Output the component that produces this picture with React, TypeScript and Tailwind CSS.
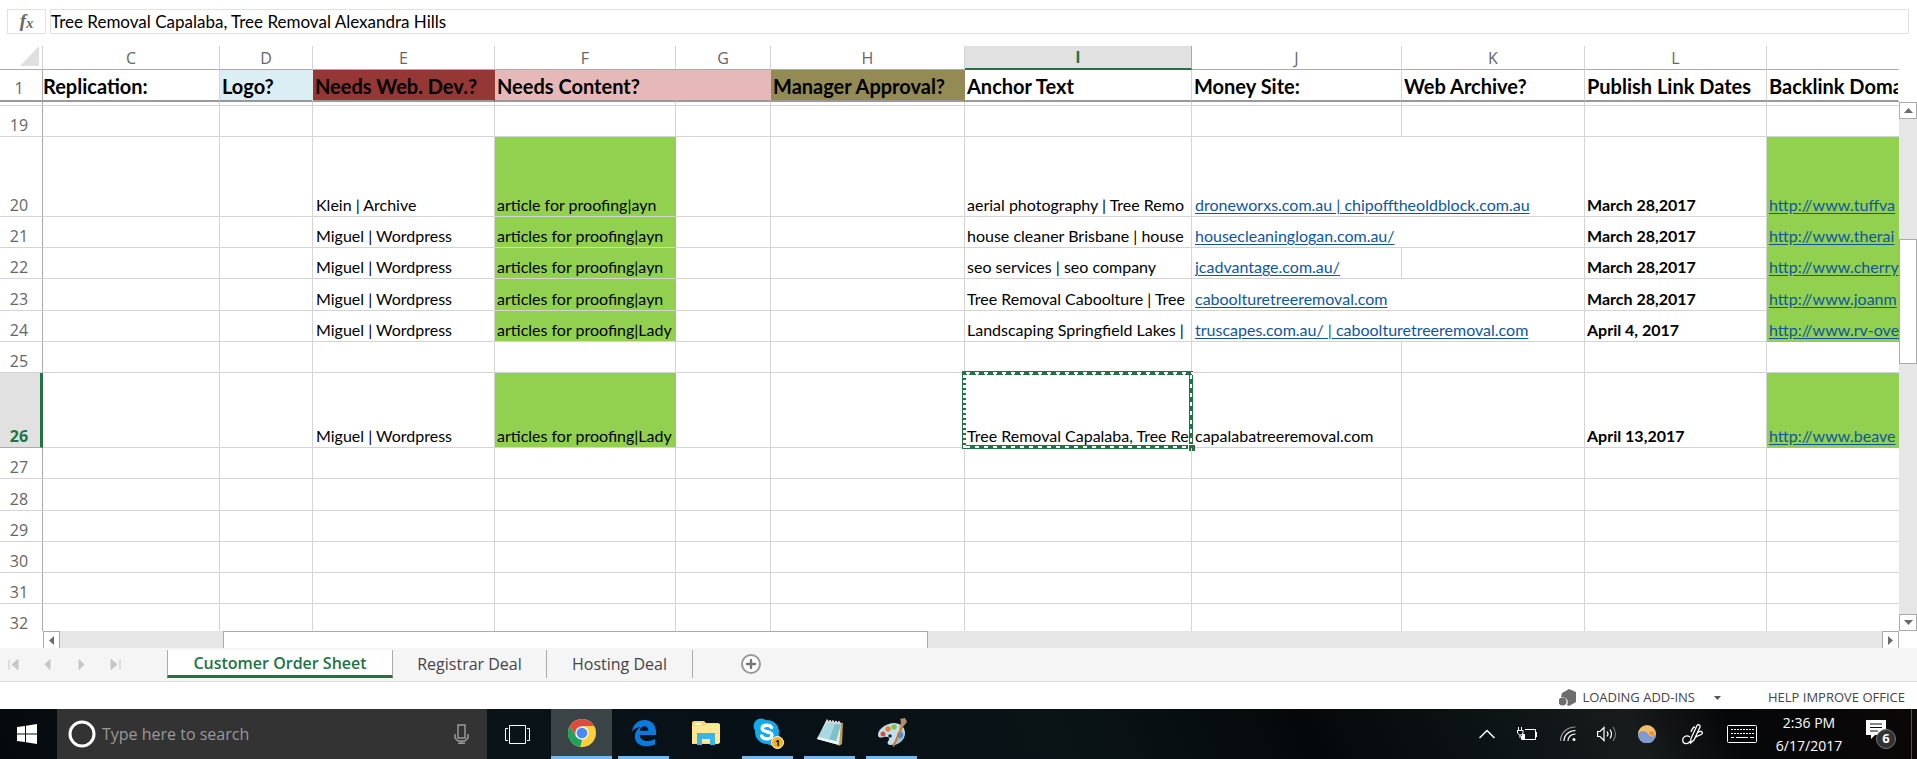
import type { ReactNode } from "react"
import { Plus } from "lucide-react"

type Row = {
  n: number
  height: string
  dev?: string
  content?: string
  anchor?: string
  money?: string
  moneyLink?: boolean
  wide?: boolean
  date?: string
  backlink?: string
}

const rows: Row[] = [
  { n: 19, height: "h-[31px]" },
  {
    n: 20,
    height: "h-[80px]",
    dev: "Klein | Archive",
    content: "article for proofing|ayn",
    anchor: "aerial photography | Tree Remo",
    money: "droneworxs.com.au | chipofftheoldblock.com.au",
    moneyLink: true,
    wide: true,
    date: "March 28,2017",
    backlink: "http://www.tuffva",
  },
  {
    n: 21,
    height: "h-[31px]",
    dev: "Miguel | Wordpress",
    content: "articles for proofing|ayn",
    anchor: "house cleaner Brisbane | house",
    money: "housecleaninglogan.com.au/",
    moneyLink: true,
    wide: true,
    date: "March 28,2017",
    backlink: "http://www.therai",
  },
  {
    n: 22,
    height: "h-[31px]",
    dev: "Miguel | Wordpress",
    content: "articles for proofing|ayn",
    anchor: "seo services | seo company",
    money: "jcadvantage.com.au/",
    moneyLink: true,
    date: "March 28,2017",
    backlink: "http://www.cherry",
  },
  {
    n: 23,
    height: "h-[32px]",
    dev: "Miguel | Wordpress",
    content: "articles for proofing|ayn",
    anchor: "Tree Removal Caboolture | Tree",
    money: "caboolturetreeremoval.com",
    moneyLink: true,
    wide: true,
    date: "March 28,2017",
    backlink: "http://www.joanm",
  },
  {
    n: 24,
    height: "h-[31px]",
    dev: "Miguel | Wordpress",
    content: "articles for proofing|Lady",
    anchor: "Landscaping Springfield Lakes |",
    money: "truscapes.com.au/ | caboolturetreeremoval.com",
    moneyLink: true,
    wide: true,
    date: "April 4, 2017",
    backlink: "http://www.rv-ove",
  },
  { n: 25, height: "h-[31px]" },
  {
    n: 26,
    height: "h-[75px]",
    dev: "Miguel | Wordpress",
    content: "articles for proofing|Lady",
    anchor: "Tree Removal Capalaba, Tree Re",
    money: "capalabatreeremoval.com",
    date: "April 13,2017",
    backlink: "http://www.beave",
  },
  { n: 27, height: "h-[31px]" },
  { n: 28, height: "h-[32px]" },
  { n: 29, height: "h-[31px]" },
  { n: 30, height: "h-[31px]" },
  { n: 31, height: "h-[31px]" },
  { n: 32, height: "h-[27px]" },
]

const letters = ["C", "D", "E", "F", "G", "H", "I", "J", "K", "L", ""]

const heads = [
  { text: "Replication:", style: "border-[#d4d4d4]" },
  { text: "Logo?", style: "border-[#daeef3] bg-[#daeef3]" },
  { text: "Needs Web. Dev.?", style: "border-[#953735] bg-[#953735]" },
  { text: "Needs Content?", style: "border-[#e6b8b7] bg-[#e6b8b7]" },
  { text: "", style: "border-[#e6b8b7] bg-[#e6b8b7]" },
  { text: "Manager Approval?", style: "border-[#948a54] bg-[#948a54]" },
  { text: "Anchor Text", style: "border-[#d4d4d4]" },
  { text: "Money Site:", style: "border-[#d4d4d4]" },
  { text: "Web Archive?", style: "border-[#d4d4d4]" },
  { text: "Publish Link Dates", style: "border-[#d4d4d4]" },
  { text: "Backlink Doma", style: "border-transparent" },
]

const cell = "border-r border-b border-[#d4d4d4] p-0 pl-[2px] align-bottom"

function Clip({ children }: { children: ReactNode }) {
  return <div className="overflow-hidden whitespace-nowrap">{children}</div>
}

function SheetLink({ children }: { children: ReactNode }) {
  return (
    <a href="#" className="text-[#0f569e] underline underline-offset-2">
      {children}
    </a>
  )
}

function Selection() {
  return (
    <div className="pointer-events-none absolute -top-[2px] -right-[2px] -bottom-[2px] -left-[3px]">
      <svg className="h-full w-full" fill="none">
        <rect width="100%" height="100%" stroke="#217346" strokeWidth="8" />
        <g stroke="#fff" strokeWidth="2">
          <line x1="4" x2="100%" y1="2" y2="2" strokeDasharray="4 5" />
          <line x1="2" x2="2" y1="4" y2="100%" strokeDasharray="3 2" />
          <g transform="translate(-2 0)">
            <line x1="100%" x2="100%" y1="4" y2="100%" strokeDasharray="4 5" />
          </g>
          <g transform="translate(0 -2)">
            <line x1="4" x2="100%" y1="100%" y2="100%" strokeDasharray="4 5" />
          </g>
        </g>
        <g stroke="#fff" strokeWidth="1">
          <line x1="4" x2="100%" y1="3.500" y2="3.500" strokeDasharray="2 7" strokeDashoffset="-1" />
          <line x1="3.500" x2="3.500" y1="4" y2="100%" strokeDasharray="3 2" />
        </g>
      </svg>
      <span className="absolute -right-[2px] -bottom-[2px] size-[7px] border-t border-l border-white bg-[#217346]" />
    </div>
  )
}

function FormulaBar() {
  return (
    <div className="flex gap-1 pt-[9px] pr-2 pl-[7px]">
      <button
        aria-label="Insert function"
        className="flex h-[25px] w-[39px] items-center justify-center border border-[#e1e1e1] font-['Liberation_Serif',serif] text-[19px] font-bold text-[#666] italic"
      >
        f<span className="pt-1 text-[14px]">x</span>
      </button>
      <input
        aria-label="Formula"
        defaultValue="Tree Removal Capalaba, Tree Removal Alexandra Hills"
        className="h-[25px] min-w-0 flex-1 border border-[#e1e1e1] font-['Lato',sans-serif] text-[17px] text-black outline-none"
      />
    </div>
  )
}

function Grid() {
  return (
    <table className="w-full table-fixed border-separate border-spacing-0 font-['Lato',sans-serif] text-[16px] leading-[22px] text-black">
      <colgroup>
        <col className="w-[43px]" />
        <col className="w-[177px]" />
        <col className="w-[93px]" />
        <col className="w-[182px]" />
        <col className="w-[181px]" />
        <col className="w-[95px]" />
        <col className="w-[194px]" />
        <col className="w-[227px]" />
        <col className="w-[210px]" />
        <col className="w-[183px]" />
        <col className="w-[182px]" />
        <col />
      </colgroup>
      <thead>
        <tr className="h-[24px] font-['Open_Sans',sans-serif] text-[16px] text-[#666]">
          <th className="border-r border-b border-[#ababab] border-r-[#d4d4d4] p-0 align-top">
            <svg className="ml-5 block size-5" viewBox="0 0 20 20">
              <path d="M19 0V20H0z" fill="#dfdfdf" />
            </svg>
          </th>
          {letters.map((letter, i) => (
            <th
              key={i}
              className={
                letter === "I"
                  ? "border-r border-b-2 border-r-[#ababab] border-b-[#217346] bg-[#e1e1e1] p-0 font-bold text-[#217346]"
                  : "border-r border-b border-r-[#d4d4d4] border-b-[#ababab] p-0 font-normal last:border-r-0"
              }
            >
              <div className="h-[22px]">{letter}</div>
            </th>
          ))}
        </tr>
        <tr className="h-[32px] text-[20px] leading-[28px]">
          <th className="border-r border-b-2 border-r-[#ababab] border-b-[#999] p-0 pr-1 align-bottom font-['Open_Sans',sans-serif] text-[16px] leading-[24px] font-normal text-[#666]">
            1
          </th>
          {heads.map((head, i) => (
            <th
              key={i}
              className={
                "border-r border-b-2 border-b-[#999] p-0 pt-[2px] text-left align-bottom font-bold " +
                (i === 0 ? "" : "pl-[2px] ") +
                head.style
              }
            >
              <Clip>{head.text}</Clip>
            </th>
          ))}
        </tr>
      </thead>
      <tbody>
        <tr className="h-[4px]">
          <td className="border-r border-b border-[#d4d4d4] border-r-[#ababab] p-0" />
          {letters.map((_, i) => (
            <td key={i} className="border-r border-b border-[#d4d4d4] p-0 last:border-r-0" />
          ))}
        </tr>
        {rows.map((row) => {
          const selected = row.n === 26
          const last = row.n === 32
          const box = last ? cell + " border-b-0" : cell
          return (
            <tr key={row.n} className={row.height}>
              <th
                className={
                  "p-0 align-bottom font-['Open_Sans',sans-serif] text-[16px] " +
                  (selected
                    ? "border-r-[3px] border-b border-[#ababab] border-r-[#217346] bg-[#e1e1e1] pr-[2px] font-bold text-[#217346]"
                    : "border-r border-[#d4d4d4] border-r-[#ababab] pr-1 font-normal text-[#666] " + (last ? "" : "border-b"))
                }
              >
                <div className={last ? "h-[27px] overflow-hidden leading-[38px]" : "leading-[22px]"}>{row.n}</div>
              </th>
              <td className={box} />
              <td className={box} />
              <td className={box + " pl-[3px]"}>
                <Clip>{row.dev}</Clip>
              </td>
              <td
                className={
                  "border-r border-b p-0 pl-[2px] align-bottom whitespace-nowrap " +
                  (row.content ? "border-[#d4d4d4] border-r-[#92d050] bg-[#92d050]" : "border-[#d4d4d4]") +
                  (last ? " border-b-0" : "")
                }
              >
                {row.content}
              </td>
              <td className={box} />
              <td className={box} />
              <td className={box + " relative"}>
                <Clip>{row.anchor}</Clip>
                {selected && <Selection />}
              </td>
              <td colSpan={row.wide ? 2 : 1} className={box + " pl-[3px]"}>
                <Clip>{row.moneyLink ? <SheetLink>{row.money}</SheetLink> : row.money}</Clip>
              </td>
              {!row.wide && <td className={box} />}
              <td className={box + " font-bold"}>
                <Clip>{row.date}</Clip>
              </td>
              <td
                className={
                  "p-0 pl-[2px] align-bottom " +
                  (row.backlink ? "border-b border-[#92d050] bg-[#92d050]" : last ? "" : "border-b border-[#d4d4d4]")
                }
              >
                {row.backlink && (
                  <Clip>
                    <SheetLink>{row.backlink}</SheetLink>
                  </Clip>
                )}
              </td>
            </tr>
          )
        })}
      </tbody>
    </table>
  )
}

function Arrow({ d }: { d: string }) {
  return (
    <svg className="size-[9px]" viewBox="0 0 9 9" fill="#6a6a6a">
      <path d={d} />
    </svg>
  )
}

function VerticalScroll() {
  return (
    <div className="mt-[56px] flex w-[18px] shrink-0 flex-col bg-[#e6e6e6]">
      <button aria-label="Scroll up" className="flex h-[17px] items-center justify-center border border-[#ababab] bg-white">
        <Arrow d="M0 7L4.500 2L9 7z" />
      </button>
      <div className="flex-[120]" />
      <div className="h-[125px] border border-[#ababab] bg-white" />
      <div className="flex-[250]" />
      <button aria-label="Scroll down" className="flex h-[17px] items-center justify-center border border-[#ababab] bg-white">
        <Arrow d="M0 2L4.500 7L9 2z" />
      </button>
    </div>
  )
}

function HorizontalScroll() {
  return (
    <div className="mr-[18px] ml-[43px] flex h-[17px] bg-[#e6e6e6]">
      <button aria-label="Scroll left" className="flex w-[17px] items-center justify-center border border-b-0 border-[#ababab] bg-white">
        <Arrow d="M7 0L2 4.500L7 9z" />
      </button>
      <div className="w-[163px]" />
      <div className="w-[38%] border border-b-0 border-[#ababab] bg-white" />
      <div className="flex-1" />
      <button aria-label="Scroll right" className="flex w-[17px] items-center justify-center border border-b-0 border-[#ababab] bg-white">
        <Arrow d="M2 0L7 4.500L2 9z" />
      </button>
    </div>
  )
}

function SheetTabs() {
  const nav = [
    { label: "First sheet", d: "M1 0V10M10 0V10L4 5z" },
    { label: "Previous sheet", d: "M8 0V10L3 5z" },
    { label: "Next sheet", d: "M3 0V10L8 5z" },
    { label: "Last sheet", d: "M10 0V10M1 0V10L7 5z" },
  ]
  return (
    <div className="flex h-[34px] items-start border-b border-[#dcdcdc] bg-[#f5f5f5] pt-[2px] font-['Open_Sans',sans-serif] text-[16px] text-[#444]">
      <div className="flex h-[28px] w-[167px] items-center gap-[23px] pl-2">
        {nav.map((item) => (
          <button key={item.label} aria-label={item.label}>
            <svg className="block size-[11px]" viewBox="0 0 11 10" fill="#c6c6c6" stroke="#c6c6c6" strokeWidth="1">
              <path d={item.d} />
            </svg>
          </button>
        ))}
      </div>
      <button className="h-[28px] w-[226px] border-x border-b-[3px] border-x-[#ababab] border-b-[#217346] bg-white leading-[24px] font-semibold text-[#217346]">
        Customer Order Sheet
      </button>
      <button className="h-[28px] w-[154px] border-r border-[#ababab] leading-[24px]">Registrar Deal</button>
      <button className="h-[28px] w-[146px] border-r border-[#ababab] leading-[24px]">Hosting Deal</button>
      <button
        aria-label="New sheet"
        className="mt-1 ml-[48px] flex size-5 items-center justify-center rounded-full border-2 border-[#999] bg-white"
      >
        <Plus className="size-[14px] text-[#777]" strokeWidth={4} />
      </button>
    </div>
  )
}

function StatusBar() {
  return (
    <div className="flex h-[27px] items-center justify-end pt-1 pr-3 font-['Open_Sans',sans-serif] text-[13px] text-[#444]">
      <svg className="mr-[6px] size-[17px]" viewBox="0 0 17 17" fill="#6d6d6d">
        <path d="M3 4L10 0L17 3V13L10 17L8 16C10 12 8 8 2 8z" />
        <circle cx="3.500" cy="12.500" r="4" />
      </svg>
      <span>LOADING ADD-INS</span>
      <svg className="mr-[47px] ml-[19px] h-1 w-[7px]" viewBox="0 0 7 4" fill="#555">
        <path d="M0 0H7L3.500 4z" />
      </svg>
      <a href="#">HELP IMPROVE OFFICE</a>
    </div>
  )
}

function ChromeIcon() {
  return (
    <svg className="size-[28px]" viewBox="0 0 28 28">
      <circle cx="14" cy="14" r="14" fill="#fdd03b" />
      <path d="M14 14L8 17.500L1.900 7A14 14 0 0 1 26.100 7H14z" fill="#dd4b3e" />
      <path d="M1.900 7L8 17.500L14 20.500L12.500 28A14 14 0 0 1 1.900 7z" fill="#1da261" />
      <path d="M20 17.500L14 28A14 14 0 0 1 12 27.900L17 18z" fill="#fdd03b" />
      <circle cx="14" cy="14" r="6.800" fill="#f4f4f4" />
      <circle cx="14" cy="14" r="5.300" fill="#4a8af4" />
    </svg>
  )
}

function EdgeIcon() {
  return (
    <svg className="size-[28px]" viewBox="0 0 28 28" fill="#0a7bdc">
      <path d="M2 12.500C3 5.500 8 1 14.500 1C21.500 1 26 6 26 12.500V16H9.700C10 20 13.500 22 17.500 22C20.500 22 23 21.200 25 20V25.200C22.500 26.600 19.500 27.300 16.300 27.300C9.500 27.300 4.800 23.300 4.800 17.500C4.800 13.500 7 10 10.500 8C7 8.400 4 10 2 12.500zM9.800 11.800H18.400C18.400 8.800 16.800 7.200 14.300 7.200C11.900 7.200 10.200 9 9.800 11.800z" />
    </svg>
  )
}

function ExplorerIcon() {
  return (
    <svg className="h-[24px] w-[28px]" viewBox="0 0 28 24">
      <path d="M0 1H13V5H0z" fill="#f5b400" />
      <path d="M0 23V1L2 0H12L14 2H27V23z" fill="#fbd971" />
      <path d="M0 22V5H12L14 3H28V22z" fill="#ffe794" />
      <path d="M3 2H9V4H3z" fill="#fff" />
      <path d="M5 24V12H23V24H18V18H10V24z" fill="#3fb3e3" />
    </svg>
  )
}

function SkypeIcon() {
  return (
    <svg className="h-[32px] w-[32px]" viewBox="0 0 32 32">
      <circle cx="15" cy="15" r="12" fill="#14a9e8" />
      <circle cx="9" cy="9" r="7.500" fill="#14a9e8" />
      <circle cx="20" cy="21" r="7.500" fill="#14a9e8" />
      <path
        d="M19.500 10.500C18.500 8.800 16.800 8.200 14.800 8.200C12 8.200 10.200 9.500 10.200 11.500C10.200 16 20 13.500 20 18.300C20 20.500 17.800 21.900 15 21.900C12.500 21.900 10.600 21 9.600 19"
        fill="none"
        stroke="#fff"
        strokeWidth="3.400"
        strokeLinecap="round"
      />
      <circle cx="25.500" cy="25.500" r="6" fill="#fcb116" stroke="#fff" strokeWidth="1" />
      <text x="25.500" y="29" textAnchor="middle" fontSize="9" fontWeight="bold" fontFamily="Open Sans, sans-serif">
        1
      </text>
    </svg>
  )
}

function NotepadIcon() {
  return (
    <svg className="size-[28px]" viewBox="0 0 28 28">
      <path d="M10 2L27 4L26 25L23 27z" fill="#c79a4b" />
      <path d="M10 2L25 4L23 26L1 20z" fill="#d9eef2" />
      <path d="M11 4L25 5L20 23L2 18z" fill="#7fc0cb" />
      <path d="M11 4L19 5L13 21L2 18z" fill="#a9d9df" />
      <path d="M2 18L20 22L23 26L1 20z" fill="#eef7f8" />
      <path d="M10 2L25 4" stroke="#d8d8d8" strokeWidth="3" strokeDasharray="2 1" />
    </svg>
  )
}

function PaintIcon() {
  return (
    <svg className="size-[30px]" viewBox="0 0 30 30">
      <path
        d="M12 6C19 3 28 7 28 15C28 22 21 28 13 27C10 26.500 10 24 12 22C13 19 10 18 7 19C4 20 1 20 1 17C1 12 6 8 12 6z"
        fill="#c5ddec"
      />
      <path d="M22 8C27 11 28 17 25 22C22 26 17 27 13 27C20 24 24 17 22 8z" fill="#94bdd8" />
      <circle cx="6" cy="16" r="2.500" fill="#d94f3a" />
      <circle cx="11" cy="11" r="2.700" fill="#e2822c" />
      <circle cx="17" cy="9" r="2.700" fill="#8bc23f" />
      <circle cx="23" cy="17" r="3" fill="#3d8fdc" />
      <circle cx="13" cy="18" r="1.800" fill="#1d2a33" />
      <path d="M17 29L15.500 28L24 8L26 9z" fill="#d0782c" />
      <path d="M23 8L24 4L23 1L28 0L30 4L26 9z" fill="#b58a68" />
    </svg>
  )
}

const apps = [
  { name: "Edge", icon: <EdgeIcon />, open: true },
  { name: "File Explorer", icon: <ExplorerIcon />, open: false },
  { name: "Skype", icon: <SkypeIcon />, open: true },
  { name: "Notepad", icon: <NotepadIcon />, open: true },
  { name: "Paint", icon: <PaintIcon />, open: true },
]

function Tray() {
  return (
    <div className="ml-auto flex items-center text-white">
      <button aria-label="Show hidden icons">
        <svg className="mr-[22px] block h-[10px] w-4" viewBox="0 0 16 10" fill="none" stroke="#fff" strokeWidth="1.500">
          <path d="M0.500 9L8 1.500L15.500 9" />
        </svg>
      </button>
      <svg className="mr-[23px] h-[14px] w-5" viewBox="0 0 20 14" fill="none" stroke="#fff">
        <path d="M8 2.500H18.500V12.500H4.500V9M19.500 5V10M1.500 0V3M4.500 0V3M0 3.500H6V6L4.500 8H2.500L0.500 6V3.500M3 8V11" />
        <path d="M5 7H8V12H5z" fill="#fff" stroke="none" />
      </svg>
      <svg className="mr-[21px] size-4" viewBox="0 0 16 16" fill="none" stroke="#fff" strokeWidth="1.200">
        <path d="M0.500 15C0.500 7 7 1 15.500 1" stroke="#999" />
        <path d="M4 15C4 9 9 4.500 15.500 4.500M8 15C8 11 11 8 15.500 8" />
        <circle cx="14" cy="13.500" r="1.500" fill="#fff" stroke="none" />
      </svg>
      <svg className="mr-[21px] h-4 w-5" viewBox="0 0 20 16" fill="none" stroke="#fff" strokeWidth="1.200">
        <path d="M0.600 5.500H3L7 1.500V14.500L3 10.500H0.600zM10 5.500Q12 8 10 10.500" />
        <path d="M13 3.500Q16 8 13 12.500" />
        <path d="M16 1Q21 8 16 15" stroke="#777" />
      </svg>
      <svg className="mr-[26px] size-[18px]" viewBox="0 0 18 18">
        <circle cx="9" cy="9" r="9" fill="#f3bd68" />
        <path d="M11 7L15 6L17 11L12 10z" fill="#ef8a2e" />
        <path d="M0 9C4 4 8 6 11 10C13 12 16 12 18 10A9 9 0 0 1 0 9z" fill="#7f9ad0" />
      </svg>
      <svg className="mr-6 size-[21px]" viewBox="0 0 21 21" fill="none" stroke="#fff" strokeWidth="1.300">
        <path d="M9 14.500L15 1.500C16 0 18.500 1 18 3L12 16L8.500 19zM13 3C11 3 10 5 9 8M8 13C4 10.500 0.500 13 0.700 16.500C1 20.500 6.500 20.500 8 17M16 8.500C18 6.500 21 7.500 20.300 9.500C19 12 14.500 10.500 13 14" />
      </svg>
      <svg className="mr-[17px] h-[18px] w-[30px]" viewBox="0 0 30 18" fill="none" stroke="#fff">
        <rect x="0.500" y="0.500" width="29" height="17" rx="1" />
        <path d="M4 4.500H27M4 8.500H27" strokeDasharray="2 1" />
        <path d="M4 12.500H7M9 12.500H21M23 12.500H27" />
      </svg>
      <div className="w-[70px] text-center font-['Open_Sans',sans-serif] text-[14px] leading-[23px]">
        <div>2:36 PM</div>
        <div>6/17/2017</div>
      </div>
      <button aria-label="Notifications" className="relative ml-[22px]">
        <svg className="block h-[30px] w-[30px]" viewBox="0 0 30 30">
          <path d="M0 1H20V16H9L5 20V16H0z" fill="#fff" />
          <path d="M4 5H16M4 8.500H16M4 12H12" stroke="#0a0d0f" strokeWidth="1.200" />
        </svg>
        <span className="absolute right-0 bottom-0 flex size-5 items-center justify-center rounded-full border border-[#777] bg-[#333] font-['Open_Sans',sans-serif] text-[13px] font-bold">
          6
        </span>
      </button>
      <div className="mr-[5px] ml-[15px] h-[50px] w-px bg-[#555]" />
    </div>
  )
}

function Taskbar() {
  return (
    <div className="flex h-[50px] bg-[linear-gradient(65deg,#04090d_0%,#0a1519_22%,#071016_38%,#0a1417_55%,#04080b_68%,#0d1415_78%,#171b1b_85%,#060709_90%,#0b0807_100%)]">
      <button aria-label="Start" className="flex w-[57px] items-center pl-[17px]">
        <svg className="size-5" viewBox="0 0 20 20" fill="#fff">
          <path d="M0 3L8 1.900V9.500H0zM9 1.700L20 0V9.500H9zM0 10.500H8V18.100L0 17zM9 10.500H20V20L9 18.300z" />
        </svg>
      </button>
      <label className="flex w-[430px] items-center bg-[#333] pr-[18px] pl-[11px]">
        <svg className="size-[28px] shrink-0" viewBox="0 0 28 28" fill="none">
          <circle cx="14" cy="14" r="12" stroke="#fff" strokeWidth="3" />
        </svg>
        <input
          aria-label="Search"
          placeholder="Type here to search"
          className="ml-[6px] min-w-0 flex-1 font-['Open_Sans',sans-serif] text-[16px] outline-none placeholder:text-[#999]"
        />
        <svg className="h-5 w-[15px]" viewBox="0 0 15 20" fill="none" stroke="#999" strokeWidth="1.500">
          <path d="M4 1H11V14H4zM1 10V14L4 17H11L14 14V10M7.500 17V19M4 19.200H11" />
        </svg>
      </label>
      <button aria-label="Task view" className="mr-[3px] flex w-[61px] items-center justify-center">
        <svg className="h-[19px] w-[25px]" viewBox="0 0 25 19" fill="none" stroke="#fff">
          <path d="M4.500 0.500H20.500V18.500H4.500zM3 3.500H0.500V15.500H3M22 3.500H24.500V15.500H22" />
        </svg>
      </button>
      <button aria-label="Chrome" className="flex w-[61px] items-center justify-center border-b-[3px] border-[#76b9ed] bg-[#3a4447]">
        <ChromeIcon />
      </button>
      {apps.map((app) => (
        <button
          key={app.name}
          aria-label={app.name}
          className={
            "mr-[5px] ml-[6px] flex w-[51px] items-center justify-center border-b-[3px] " +
            (app.open ? "border-[#76b9ed]" : "border-transparent")
          }
        >
          {app.icon}
        </button>
      ))}
      <Tray />
    </div>
  )
}

export default function App() {
  return (
    <div className="bg-white">
      <FormulaBar />
      <div className="mt-3 flex">
        <div className="min-w-0 flex-1">
          <Grid />
        </div>
        <VerticalScroll />
      </div>
      <HorizontalScroll />
      <SheetTabs />
      <StatusBar />
      <Taskbar />
    </div>
  )
}
